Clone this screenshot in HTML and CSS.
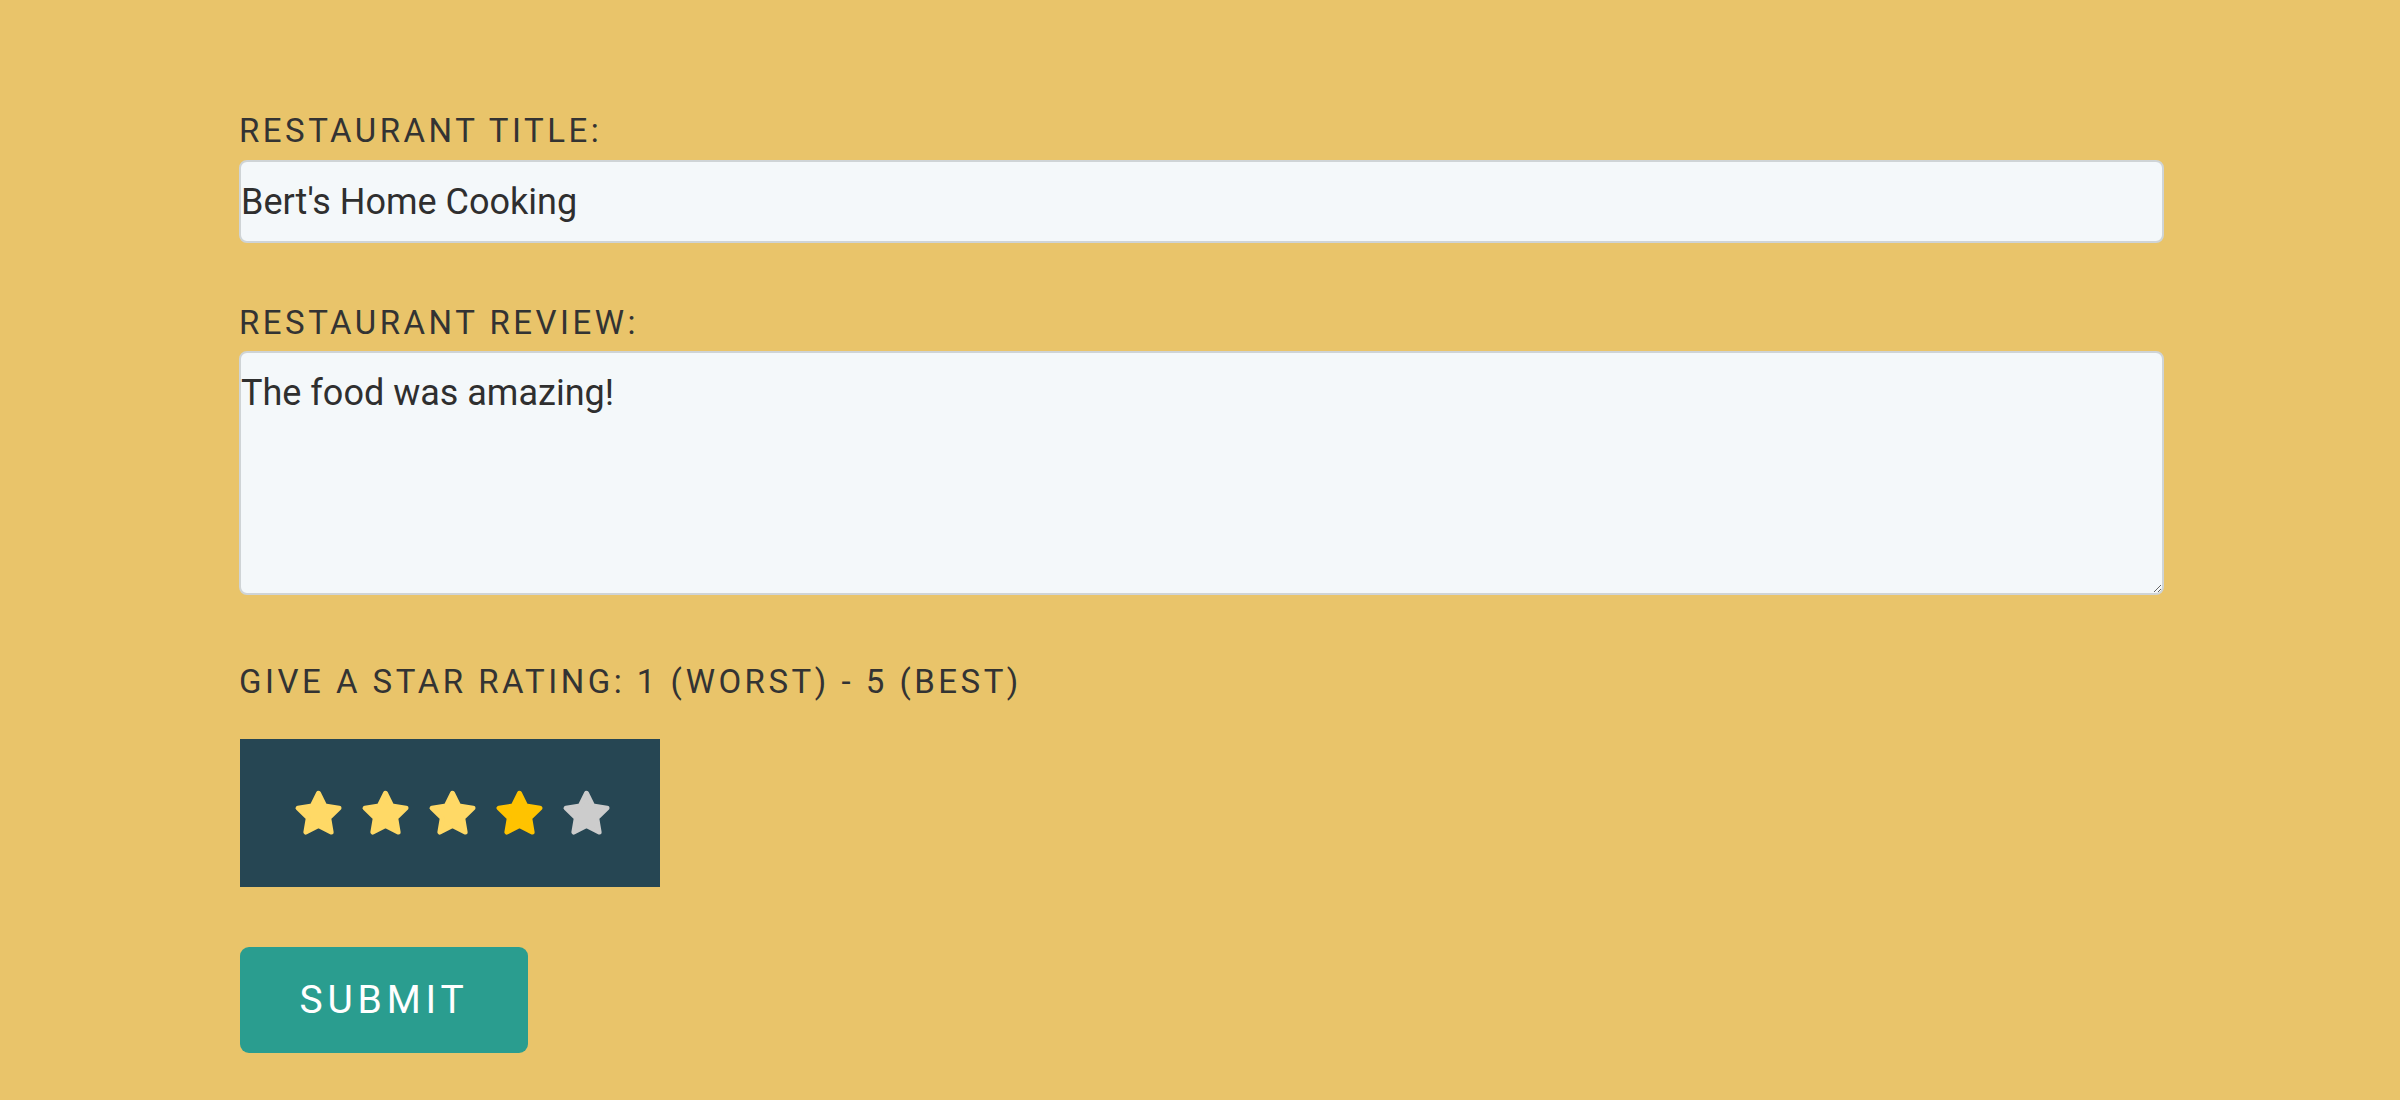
FILE: index.html
```html
<!DOCTYPE html>
<html lang="en">
<head>
<meta charset="utf-8">
<title>Review</title>
<link rel="stylesheet" href="styles.css">
</head>
<body>
<form class="review-form">
  <label class="field-label" for="title">Restaurant Title:</label>
  <input class="text-input" id="title" type="text" value="Bert's Home Cooking">
  <label class="field-label" for="review">Restaurant Review:</label>
  <textarea class="text-area" id="review">The food was amazing!</textarea>
  <p class="field-label rating-label">Give a star rating: 1 (worst) - 5 (best)</p>
  <div class="stars">
    <svg class="star star-light" viewBox="0 0 24 24"><path d="M12 2.8l2.9 5.8 6.4.95-4.65 4.5 1.1 6.4L12 17.45l-5.75 3 1.1-6.4-4.65-4.5 6.4-.95z"/></svg>
    <svg class="star star-light" viewBox="0 0 24 24"><path d="M12 2.8l2.9 5.8 6.4.95-4.65 4.5 1.1 6.4L12 17.45l-5.75 3 1.1-6.4-4.65-4.5 6.4-.95z"/></svg>
    <svg class="star star-light" viewBox="0 0 24 24"><path d="M12 2.8l2.9 5.8 6.4.95-4.65 4.5 1.1 6.4L12 17.45l-5.75 3 1.1-6.4-4.65-4.5 6.4-.95z"/></svg>
    <svg class="star star-gold" viewBox="0 0 24 24"><path d="M12 2.8l2.9 5.8 6.4.95-4.65 4.5 1.1 6.4L12 17.45l-5.75 3 1.1-6.4-4.65-4.5 6.4-.95z"/></svg>
    <svg class="star star-off" viewBox="0 0 24 24"><path d="M12 2.8l2.9 5.8 6.4.95-4.65 4.5 1.1 6.4L12 17.45l-5.75 3 1.1-6.4-4.65-4.5 6.4-.95z"/></svg>
  </div>
  <button class="submit" type="button">Submit</button>
</form>
</body>
</html>
```
FILE: styles.css
```css
html, body {
  margin: 0;
  padding: 0;
  background: #e9c46a;
}
body {
  font-family: Roboto, "Noto Sans", sans-serif;
  color: #333333;
}
.review-form {
  width: 1925px;
  margin: 0 239px;
  padding-top: 111px;
  display: flex;
  flex-direction: column;
  align-items: flex-start;
}
.field-label {
  display: block;
  margin: 0 0 10px;
  font-size: 33px;
  letter-spacing: 3.5px;
  text-transform: uppercase;
  color: #333333;
}
.text-input, .text-area {
  box-sizing: border-box;
  width: 100%;
  font-family: Roboto, "Noto Sans", sans-serif;
  font-size: 36px;
  color: #2f2f2f;
  background: #f4f8fa;
  border: 2px solid #cfd4d6;
  border-radius: 8px;
  padding: 18px 0;
  margin: 0 0 60px;
  outline: none;
}
.text-input {
  height: 83px;
}
.text-area {
  display: block;
  height: 244px;
  margin-top: -1px;
  resize: vertical;
  padding: 19px 0 16px;
  margin-bottom: 67px;
}
.rating-label {
  margin-bottom: 38px;
}
.stars {
  box-sizing: border-box;
  width: 420px;
  height: 148px;
  margin-left: 1px;
  background: #264653;
  display: flex;
  align-items: center;
  padding-left: 52px;
  gap: 14px;
  margin-bottom: 60px;
}
.star {
  width: 53px;
  height: 53px;
}
.star path {
  stroke-linejoin: round;
  stroke-width: 2.2;
}
.star-light { fill: #ffd966; stroke: #ffd966; }
.star-gold { fill: #ffc300; stroke: #ffc300; }
.star-off { fill: #cccccc; stroke: #cccccc; }
.submit {
  box-sizing: border-box;
  width: 288px;
  height: 106px;
  margin-left: 1px;
  background: #2a9d8f;
  border: none;
  border-radius: 9px;
  color: #ffffff;
  font-family: Roboto, "Noto Sans", sans-serif;
  font-size: 39px;
  letter-spacing: 4.8px;
  text-transform: uppercase;
  padding: 0;
}
```
